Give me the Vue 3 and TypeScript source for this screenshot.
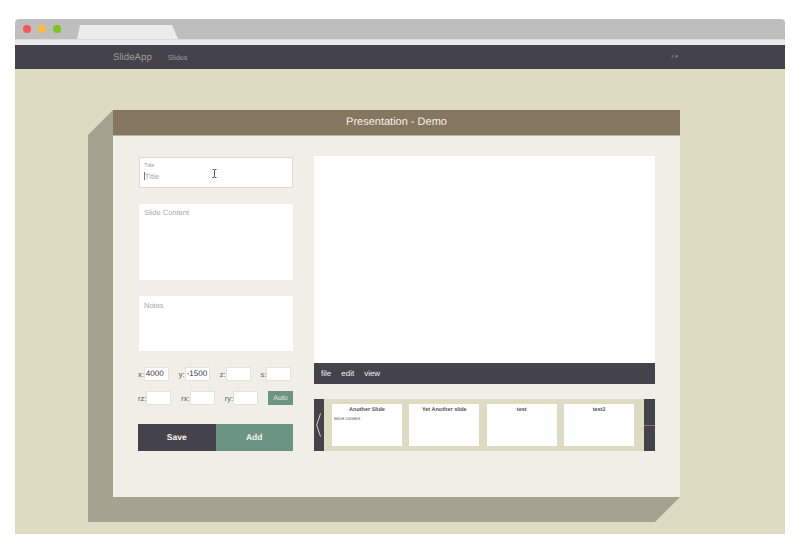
<script setup lang="ts">
interface Slide { title: string; body: string }
const slides: Slide[] = [
  { title: 'Another Slide', body: 'More content' },
  { title: 'Yet Another slide', body: '' },
  { title: 'test', body: '' },
  { title: 'test2', body: '' },
]
const row1 = [
  { label: 'x:', value: '4000' },
  { label: 'y:', value: '-1500' },
  { label: 'z:', value: '' },
  { label: 's:', value: '' },
]
const row2 = [
  { label: 'rz:', value: '' },
  { label: 'rx:', value: '' },
  { label: 'ry:', value: '' },
]
</script>

<template>
  <div class="page">
    <div class="window">
      <div class="chrome">
        <div class="lights">
          <span class="dot red"></span>
          <span class="dot yellow"></span>
          <span class="dot green"></span>
        </div>
        <div class="tab"></div>
      </div>
      <div class="strip"></div>
      <nav class="navbar">
        <span class="brand">SlideApp</span>
        <span class="navlink">Slides</span>
        <span class="user">s ▾</span>
      </nav>
      <main class="stage">
        <section class="card">
          <div class="shadow"></div>
          <header class="card-head">Presentation - Demo</header>
          <div class="card-body">
            <div class="left">
              <div class="field title-field">
                <span class="float-label">Title</span>
                <span class="placeholder"><i class="caret"></i>Title</span>
                <svg class="ibeam" width="5" height="9" viewBox="0 0 5 9">
                  <path d="M0.5 0.5H2L2.5 1L3 0.5H4.5M2.5 1V8M0.5 8.5H2L2.5 8L3 8.5H4.5" fill="none" stroke="#33322c" stroke-width="0.8" />
                </svg>
              </div>
              <div class="field content-field"><span class="placeholder">Slide Content</span></div>
              <div class="field notes-field"><span class="placeholder">Notes</span></div>
              <div class="coords one">
                <label v-for="c in row1" :key="c.label" class="coord">
                  <span>{{ c.label }}</span><span class="num">{{ c.value }}</span>
                </label>
              </div>
              <div class="coords two">
                <label v-for="c in row2" :key="c.label" class="coord">
                  <span>{{ c.label }}</span><span class="num">{{ c.value }}</span>
                </label>
                <span class="auto">Auto</span>
              </div>
              <div class="actions">
                <span class="btn save">Save</span>
                <span class="btn add">Add</span>
              </div>
            </div>
            <div class="right">
              <div class="preview"></div>
              <div class="toolbar">
                <span>file</span><span>edit</span><span>view</span>
              </div>
              <div class="film">
                <div class="nav prev">
                  <svg width="5" height="24" viewBox="0 0 5 24">
                    <path d="M4.5 0.5L0.7 12L4.5 23.5" fill="none" stroke="#e4e2d2" stroke-width="0.9" />
                  </svg>
                </div>
                <div class="thumbs">
                  <article v-for="s in slides" :key="s.title" class="thumb">
                    <h4>{{ s.title }}</h4>
                    <p>{{ s.body }}</p>
                  </article>
                </div>
                <div class="nav next"><i class="rule"></i></div>
              </div>
            </div>
          </div>
        </section>
      </main>
    </div>
  </div>
</template>

<style scoped>
.page {
  width: 800px;
  height: 560px;
  background: #fff;
  padding: 19px 15px 26px;
  box-sizing: border-box;
  font-family: "Liberation Sans", Arial, sans-serif;
  text-rendering: geometricPrecision;
}
.window {
  height: 515px;
  display: flex;
  flex-direction: column;
  border-radius: 4px 4px 0 0;
  overflow: hidden;
}
.chrome {
  height: 20px;
  flex: none;
  background: #bebebe;
  display: flex;
  align-items: flex-end;
}
.lights {
  display: flex;
  gap: 7px;
  padding: 0 0 6px 8px;
}
.dot {
  width: 8px;
  height: 8px;
  border-radius: 50%;
}
.red { background: #fc5753; }
.yellow { background: #fdbc40; }
.green { background: #7cc61a; }
.tab {
  width: 101px;
  height: 14px;
  margin-left: 16px;
  background: #ececec;
  clip-path: polygon(3px 0, 95px 0, 101px 100%, 0 100%);
  border-radius: 2px 2px 0 0;
}
.strip {
  height: 6px;
  flex: none;
  background: #e9e9e9;
  border-top: 1px solid #dcdcdc;
  box-sizing: border-box;
}
.navbar {
  height: 24px;
  flex: none;
  background: #44434c;
  display: flex;
  align-items: center;
  padding-left: 98px;
  color: #9c9b90;
}
.brand { font-size: 9.7px; }
.navlink { font-size: 7.2px; margin-left: 16px; }
.user { font-size: 5px; margin-left: 484px; }
.stage {
  flex: 1;
  background: #dddbc1;
  padding: 41px 105px 0 98px;
}
.card {
  position: relative;
  height: 387px;
  background: #efefe7;
  display: flex;
  flex-direction: column;
}
.shadow {
  position: absolute;
  z-index: 0;
  left: -25px;
  top: 0;
  width: 592px;
  height: 412px;
  background: #a5a38f;
  clip-path: polygon(25px 0, 592px 387px, 567px 412px, 0 412px, 0 25px);
}
.card-head, .card-body { position: relative; z-index: 1; }
.card-head {
  height: 25px;
  flex: none;
  background: #85775f;
  border-bottom: 1px solid #b9b5a4;
  color: #f2f1ea;
  font-size: 11px;
  line-height: 25px;
  text-align: center;
}
.card-body {
  flex: 1;
  background: #efefe7;
  padding: 20px 25px 0 26px;
  display: flex;
  gap: 20px;
}
.left {
  width: 155px;
  flex: none;
  display: flex;
  flex-direction: column;
}
.field {
  position: relative;
  width: 154px;
  background: #fff;
  box-sizing: border-box;
  padding: 4px 5px;
  font-size: 7.5px;
  color: #a9a9a9;
}
.title-field {
  height: 31px;
  margin-top: 1px;
  border: 1px solid #d9d9d5;
  padding: 5px 4px 0;
}
.float-label {
  display: block;
  font-size: 5.5px;
  line-height: 7px;
  color: #999;
}
.title-field .placeholder {
  display: block;
  line-height: 11px;
  margin-top: 1px;
}
.caret {
  display: inline-block;
  width: 1px;
  height: 8px;
  background: #777;
  vertical-align: -1px;
}
.ibeam {
  position: absolute;
  left: 72px;
  top: 11px;
}
.content-field { height: 76px; margin-top: 16px; }
.notes-field { height: 55px; margin-top: 16px; padding-top: 5px; }
.coords {
  display: flex;
  align-items: center;
  margin-left: -1px;
  font-size: 7.5px;
  color: #5b5a52;
}
.coords.one { margin-top: 16px; gap: 10px; height: 14px; }
.coords.two { margin-top: 10px; height: 14px; }
.coord { display: flex; align-items: center; }
.num {
  width: 25px;
  height: 14px;
  box-sizing: border-box;
  background: #fff;
  border: 1px solid #e3e3dc;
  color: #33323a;
  font-size: 8px;
  line-height: 12px;
  padding-left: 1px;
}
.coords.two .coord { margin-right: 10px; }
.auto {
  width: 25px;
  height: 14px;
  background: #6c9483;
  color: #e4e9df;
  font-size: 7px;
  line-height: 15px;
  text-align: center;
}
.actions {
  display: flex;
  width: 155px;
  margin-top: 19px;
  margin-left: -1px;
  height: 27px;
}
.btn {
  width: 50%;
  color: #f4f3ea;
  font-size: 8.5px;
  font-weight: 700;
  line-height: 27px;
  text-align: center;
}
.save { background: #44434c; }
.add { background: #6c9483; }
.right {
  width: 341px;
  flex: none;
  display: flex;
  flex-direction: column;
}
.preview { height: 207px; background: #fff; flex: none; }
.toolbar {
  height: 21px;
  flex: none;
  background: #44434c;
  display: flex;
  align-items: center;
  gap: 10px;
  padding-left: 7px;
  color: #f2f1ea;
  font-size: 8px;
}
.film {
  margin-top: 15px;
  height: 52px;
  display: flex;
  background: #dddbc1;
}
.nav {
  width: 10px;
  flex: none;
  background: #44434c;
  display: flex;
  align-items: center;
  justify-content: center;
}
.prev { justify-content: flex-start; padding-left: 2px; box-sizing: border-box; }
.next { width: 11px; position: relative; }
.rule {
  position: absolute;
  left: 0;
  right: 0;
  top: 26px;
  height: 1px;
  background: #85775f;
}
.thumbs {
  flex: 1;
  display: flex;
  gap: 7.5px;
  padding: 5px 10px 5px 8px;
}
.thumb {
  flex: 1;
  background: #fff;
  min-width: 0;
}
.thumb h4 {
  margin: 0;
  padding-top: 3px;
  font-size: 5.5px;
  line-height: 7px;
  font-weight: 700;
  color: #55544e;
  text-align: center;
}
.thumb p {
  margin: 2px 0 0 2px;
  font-size: 4.5px;
  line-height: 6px;
  color: #55544e;
}
</style>
